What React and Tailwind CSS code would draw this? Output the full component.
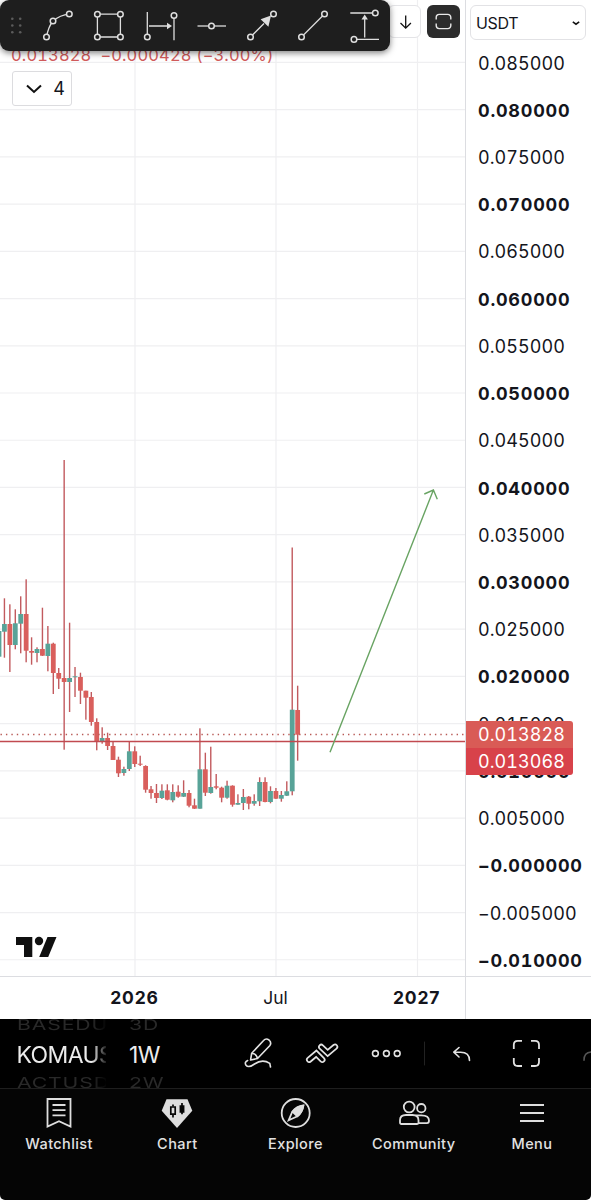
import React from "react";

const GREEN = "#58a398";
const RED = "#d95f5c";

// [wick top, body top, body bottom, wick bottom, rising]
const CANDLES = [
	[631, 631, 656.7, 656.7, 1],
	[598.3, 624, 631.7, 657.7, 1],
	[604.3, 624, 645, 672, 0],
	[609.3, 623.3, 645, 649.3, 1],
	[596.3, 614, 623.7, 653.3, 1],
	[579.3, 614, 650.7, 662.3, 0],
	[637.3, 651, 652.7, 664.7, 0],
	[647.3, 649, 653, 662.3, 1],
	[607.7, 649, 655.7, 656, 0],
	[626, 643.7, 656, 671.3, 1],
	[642.7, 643.7, 673, 694, 0],
	[668, 673, 678.7, 689, 0],
	[460, 678, 682, 749.7, 0],
	[622.7, 678, 682, 712, 1],
	[667, 676.3, 677.3, 697, 1],
	[672.7, 677, 690.7, 704, 0],
	[690.7, 690.7, 697.7, 719.7, 0],
	[692, 697, 722, 725.7, 0],
	[718.3, 722, 741.7, 750.3, 0],
	[727.3, 738, 741.7, 743.7, 1],
	[732.7, 738, 746, 750, 0],
	[741.7, 746, 760, 760, 0],
	[756.7, 759.7, 773.3, 777, 0],
	[766.7, 769, 773, 775.7, 1],
	[741, 751.3, 769, 771, 1],
	[746.3, 751.3, 764, 767, 0],
	[755.7, 763.7, 764.7, 766, 0],
	[765.3, 766, 789.7, 792.7, 0],
	[786, 789.3, 793, 798.7, 0],
	[784, 793, 798, 803, 0],
	[784.3, 790.7, 798, 799, 1],
	[784.3, 790.3, 799.7, 800.3, 0],
	[784.3, 792, 800.3, 802.3, 1],
	[785.3, 791.7, 796.7, 797.7, 0],
	[780.3, 793, 796.7, 797, 1],
	[790, 793, 805.7, 807.3, 0],
	[798.7, 805.3, 808.7, 809, 0],
	[728.3, 769.3, 808.7, 808.7, 1],
	[752.7, 769.3, 792.7, 796, 0],
	[746.7, 787, 793, 793.7, 1],
	[774, 786.3, 787.7, 789.3, 0],
	[786.7, 787.7, 797.7, 802.3, 0],
	[780.7, 785.7, 797.7, 798.7, 1],
	[785.3, 785.7, 804.7, 806.7, 0],
	[794.3, 803, 804.7, 804.7, 1],
	[789, 797, 803, 810, 1],
	[796, 796.7, 803.7, 809.3, 0],
	[794.3, 801, 803.7, 805.7, 1],
	[777.3, 782, 801.3, 806, 1],
	[777.3, 782, 802, 802.3, 0],
	[786.3, 791, 802, 803.3, 1],
	[788, 791, 798.7, 799, 0],
	[791, 795, 798.7, 801.7, 1],
	[781.3, 791.3, 795.7, 796, 1],
	[547.5, 709.7, 791.3, 795.3, 1],
	[685.7, 710, 734.7, 760.7, 0],
];

const PRICES = [
	"0.085000",
	"0.080000",
	"0.075000",
	"0.070000",
	"0.065000",
	"0.060000",
	"0.055000",
	"0.050000",
	"0.045000",
	"0.040000",
	"0.035000",
	"0.030000",
	"0.025000",
	"0.020000",
	"0.015000",
	"0.010000",
	"0.005000",
	"−0.000000",
	"−0.005000",
	"−0.010000",
];

const Chart = () => (
	<svg className="block h-[976px] w-[465px]" viewBox="0 0 465 976">
		<g stroke="#efeff1" strokeWidth="1.2">
			{PRICES.map((price, i) => (
				<line
					key={price}
					x1="0"
					x2="465"
					y1={62.4 + i * 47.23}
					y2={62.4 + i * 47.23}
				/>
			))}
			<line x1="135" x2="135" y1="0" y2="976" />
			<line x1="276" x2="276" y1="0" y2="976" />
			<line x1="417.5" x2="417.5" y1="0" y2="976" />
		</g>
		{CANDLES.map(([high, top, bottom, low, up], i) => {
			const x = -1 + i * 5.43;
			return (
				<g key={i}>
					<rect
						x={x - 0.7}
						y={high}
						width="1.4"
						height={low - high}
						fill="#c25a5e"
					/>
					<rect
						x={x - 2.4}
						y={top}
						width="4.8"
						height={Math.max(bottom - top, 1)}
						fill={up ? GREEN : RED}
					/>
				</g>
			);
		})}
		<line
			x1="0.5"
			x2="465"
			y1="734.5"
			y2="734.5"
			stroke="#b85a56"
			strokeWidth="1.4"
			strokeDasharray="1.4 4.03"
		/>
		<line
			x1="0"
			x2="465"
			y1="741.5"
			y2="741.5"
			stroke="#c14a50"
			strokeWidth="1.4"
		/>
		<path
			d="M330 752.3 433.4 490M424.3 494l9.1-4 3.9 9.2"
			fill="none"
			stroke="#69a463"
			strokeWidth="1.4"
		/>
		<g fill="#101010">
			<path d="M16 937h16.3v20H24v-12h-8z" />
			<circle cx="39" cy="941" r="4.2" />
			<path d="M47.5 937h9L48.2 957h-9z" />
		</g>
	</svg>
);

const PriceScale = () => (
	<div className="relative w-[126px] border-l border-[#dcdde1] tabular-nums">
		<div className="mt-[5px] mr-[5px] ml-1 flex h-[35px] items-center justify-between rounded-[6px] border border-[#e2e2e5] bg-white pr-[5px] pl-[5px]">
			<span className="text-[16px] tracking-[-0.3px]">USDT</span>
			<svg
				className="h-2 w-2"
				viewBox="0 0 8 8"
				fill="none"
				stroke="#111"
				strokeWidth="1.5"
			>
				<path d="m.8 2.8 3.2 2.4 3.2-2.4" />
			</svg>
		</div>
		<div className="-mt-[0.5px] flex flex-col pl-3 text-[18px]">
			{PRICES.map((price, i) => (
				<span
					key={price}
					className={
						i % 2
							? "flex h-[47.23px] items-center font-bold tracking-[0.75px] whitespace-nowrap"
							: "flex h-[47.23px] items-center tracking-[0.05px] whitespace-nowrap"
					}
				>
					{price}
				</span>
			))}
		</div>
		<div className="absolute top-[721px] left-0 flex w-[107px] flex-col overflow-hidden rounded-r-[3px] text-[18px] tracking-[0.05px] text-white">
			<span className="flex h-[26.5px] items-center bg-[#d95b56] pl-3">
				0.013828
			</span>
			<span className="flex h-[27px] items-center bg-[#d8424a] pl-3">
				0.013068
			</span>
		</div>
	</div>
);

const DrawingTools = () => (
	<div className="absolute top-0 left-0 h-[51px] w-[389.5px] rounded-[9px] bg-[#1e1e1e] shadow-[0_2px_6px_rgba(0,0,0,0.5)]">
		<svg
			className="h-[51px] w-[389px]"
			viewBox="0 0 389 51"
			fill="none"
			stroke="#dedede"
			strokeWidth="1.3"
		>
			<g fill="#5c5c5c" stroke="none">
				{[18.7, 25.5, 32.3].map((y) => (
					<g key={y}>
						<circle cx="12.3" cy={y} r="1.3" />
						<circle cx="20.2" cy={y} r="1.3" />
					</g>
				))}
			</g>
			<path d="M46.5 37Q48.5 26 53 21.2M53 21.2Q60 15 69.3 14.2" />
			<path d="M97.4 14.2h23v22.8h-23z" />
			<path d="M147.3 12v25M174 15.5v24.7M149 26h20" />
			<path d="M197.5 26h28.5" />
			<path d="M250.5 37 264 23.5M271 16.5l2.5-2.5" />
			<path d="m301.5 37 23-23" />
			<path d="M350.3 13H375M354 39.4h25M364.7 37.5V18" />
			<g fill="#dedede" stroke="none">
				<path d="m172 26-5-3.2v6.4z" />
				<path d="m271 15.5-2.6 11.2-7.8-7.5z" />
				<path d="m364.7 14.5-3.2 5h6.4z" />
			</g>
			<g fill="#1e1e1e" strokeWidth="1.5">
				<circle cx="46.5" cy="37" r="2.8" />
				<circle cx="53" cy="21" r="2.8" />
				<circle cx="69.3" cy="14" r="2.8" />
				<circle cx="97.4" cy="14.2" r="2.8" />
				<circle cx="120.4" cy="14.2" r="2.8" />
				<circle cx="97.4" cy="37" r="2.8" />
				<circle cx="120.4" cy="37" r="2.8" />
				<circle cx="147.3" cy="37" r="2.8" />
				<circle cx="174" cy="15.5" r="2.8" />
				<circle cx="211.5" cy="26" r="2.8" />
				<circle cx="250.5" cy="37" r="2.8" />
				<circle cx="273.5" cy="14" r="2.8" />
				<circle cx="301.5" cy="37" r="2.8" />
				<circle cx="324.5" cy="14" r="2.8" />
				<circle cx="375.3" cy="13" r="2.8" />
				<circle cx="354" cy="39.4" r="2.8" />
			</g>
		</svg>
	</div>
);

const ChartOverlay = () => (
	<>
		<div className="absolute top-[44px] left-[11px] flex gap-[9px] text-[16.5px] leading-[22px] tracking-[0.13px] whitespace-nowrap text-[#d15b5b] tabular-nums">
			<span>0.013828</span>
			<span>−0.000428 (−3.00%)</span>
		</div>
		<div className="absolute top-[71px] left-3 flex h-[35px] w-[60px] items-center justify-between rounded-[3px] border border-[#dcdcdf] bg-white pr-[6px] pl-3 text-[18px]">
			<svg
				className="h-[10px] w-[18px]"
				viewBox="0 0 18 10"
				fill="none"
				stroke="#111"
				strokeWidth="2"
			>
				<path d="m2 1.5 7 6.5 7-6.5" />
			</svg>
			<span>4</span>
		</div>
		<div className="absolute top-[5px] left-[388px] flex h-[33px] w-[33px] items-center justify-center rounded-[6px] border border-[#e4e4e7] bg-white">
			<svg
				className="h-4 w-4"
				viewBox="0 0 16 16"
				fill="none"
				stroke="#111"
				strokeWidth="1.3"
			>
				<path d="M8.7 1.5v12.7M3.5 9l5.2 5.2L13.9 9" />
			</svg>
		</div>
		<div className="absolute top-[5px] left-[427px] flex h-[33px] w-[32.5px] items-center justify-center rounded-[6px] bg-[#2c2c2c]">
			<svg
				className="h-[17px] w-[17px]"
				viewBox="0 0 17 17"
				fill="none"
				stroke="#e8e8e8"
				strokeWidth="1.4"
			>
				<path d="M1.2 6.5V4.4a3 3 0 0 1 3-3h8.6a3 3 0 0 1 3 3v2.1M1.2 10.5v2.1a3 3 0 0 0 3 3h8.6a3 3 0 0 0 3-3v-2.1" />
			</svg>
		</div>
		<DrawingTools />
	</>
);

const Wheel = ({ items, className }) => (
	<div className={`flex flex-col overflow-hidden ${className}`}>
		<span className="-mt-[5px] h-[20px] origin-left scale-x-[1.06] scale-y-[0.75] text-[20px] leading-[22px] tracking-[0.8px] text-[#292929]">
			{items[0]}
		</span>
		<span className="h-[39px] text-[23px] leading-[42px] text-[#ececec]">
			{items[1]}
		</span>
		<span className="h-[20px] origin-left scale-x-[1.06] scale-y-[0.75] text-[20px] leading-[21px] tracking-[0.8px] text-[#292929]">
			{items[2]}
		</span>
	</div>
);

const Toolbar = () => (
	<div className="flex h-[70px] border-b border-[#1e1e1e] bg-black">
		<Wheel
			className="ml-[16.5px] w-[89px] tracking-[-0.6px] [mask-image:linear-gradient(to_right,black_75px,transparent_91px)]"
			items={["BASEDUSDT", "KOMAUSDT", "ACTUSDT"]}
		/>
		<Wheel
			className="ml-[23.5px] w-[50px] tracking-[-0.5px]"
			items={["3D", "1W", "2W"]}
		/>
		<svg
			className="ml-auto h-[68px] w-[351px]"
			viewBox="240 1019 351 68"
			fill="none"
			stroke="#e2e2e2"
			strokeWidth="1.6"
			strokeLinecap="round"
			strokeLinejoin="round"
		>
			<path d="M250.6 1060 251.7 1053.2 263.6 1040.5Q266 1037.8 269 1040 272 1042.8 269.7 1045.7L257.5 1058.5ZM251.8 1053.3Q256.6 1053.6 257.4 1058.4M247.7 1060.5Q244.3 1062 245.8 1065 248.5 1068.5 254.5 1064 262.5 1058.5 269.8 1063.4L270.5 1067" />
			<g strokeLinejoin="miter">
				<path
					d="m309.2 1059.7 7.1-6 6 6M321.3 1047l6.4 6 7.3-6.2"
					strokeWidth="6.4"
				/>
				<path
					d="m309.2 1059.7 7.1-6 6 6M321.3 1047l6.4 6 7.3-6.2"
					stroke="#000"
					strokeWidth="3"
				/>
			</g>
			<circle cx="375.4" cy="1053.5" r="2.9" />
			<circle cx="386.4" cy="1053.5" r="2.9" />
			<circle cx="397.2" cy="1053.5" r="2.9" />
			<path d="M424.5 1042v23" stroke="#222" strokeWidth="1" />
			<path d="m459 1047.5-5.2 4.7 5.2 4.8M454.2 1052.2h6.3q9 0 9 8.2" />
			<path
				d="M513.8 1049v-4.2q0-4 4-4h4.2M531 1040.8h4q4 0 4 4v4.2M539 1058v4q0 4-4 4h-4M522 1066h-4.2q-4 0-4-4v-4"
				strokeWidth="1.8"
				strokeLinecap="butt"
			/>
			<path d="M591 1052q-7 .5-7 8.2" stroke="#555" />
		</svg>
	</div>
);

const icons = {
	Watchlist: (
		<path d="M4.5 2h23v27.5L16 24.2 4.5 29.5zM9.5 8h13M9.5 13.2h13M9.5 18.4h13" />
	),
	Chart: (
		<>
			<path d="M5.5 2.3h21l4.8 11.4L16 31 .7 13.7z" fill="#dedede" stroke="none" />
			<g stroke="#070707" strokeWidth="1.7">
				<path d="M12 7.5v2M12 17.5v3M21 6v3M21 15v2.2" />
				<path d="M9.8 10h4.4v7.2H9.8z" />
				<path d="M19.4 9h3.2v6h-3.2z" fill="#070707" />
			</g>
		</>
	),
	Explore: (
		<>
			<circle cx="15.7" cy="16" r="14" />
			<path d="m8.7 23.2 3.7-8.7q4-5 11-6-1.2 7-6 10.8z" />
			<path d="m12.7 14.8 4.5 4.4Q22.5 15 23.3 8.6q-7 1.4-10.6 6.2z" fill="#dedede" />
		</>
	),
	Community: (
		<>
			<circle cx="11.2" cy="10" r="5.4" />
			<circle cx="23.3" cy="11.2" r="4.2" />
			<path d="M2 25.6v-2.4Q2 18 8 18h6.5q6 0 6 5.2v2.4q0 1.4-1.4 1.4H3.4Q2 27 2 25.6zM17.6 18.4h5.7q7.7 0 7.7 5.2 0 2.6-2 2.6h-8.5" />
		</>
	),
	Menu: <path d="M4 8h24M4 16h24M4 24h24" />,
};

const BottomNav = () => (
	<div className="flex h-[111px] bg-[#050505] pt-[8px]">
		{Object.keys(icons).map((name) => (
			<div key={name} className="flex flex-1 flex-col items-center">
				<svg
					className="h-8 w-8"
					viewBox="0 0 32 32"
					fill="none"
					stroke="#dedede"
					strokeWidth="1.8"
				>
					{icons[name]}
				</svg>
				<span className="mt-[5px] text-[14.5px] leading-5 font-medium tracking-[0.4px] text-[#e2e2e2]">
					{name}
				</span>
			</div>
		))}
	</div>
);

const App = () => {
	return (
		<div className="relative flex h-[1200px] w-[591px] flex-col overflow-hidden bg-white font-['Inter',sans-serif] text-[#14151c]">
			<div className="flex h-[976px]">
				<Chart />
				<PriceScale />
			</div>
			<div className="flex h-[43px] border-t border-[#dcdde1] text-[17.5px]">
				<div className="flex w-[466px] items-center border-r border-[#dcdde1] pt-px pl-[64px]">
					<span className="w-[141px] text-center font-bold tracking-[0.8px]">
						2026
					</span>
					<span className="w-[141px] text-center">Jul</span>
					<span className="w-[119px] pl-[47px] font-bold tracking-[0.8px]">
						2027
					</span>
				</div>
			</div>
			<div className="overflow-hidden rounded-b-[5px]">
				<Toolbar />
				<BottomNav />
			</div>
			<ChartOverlay />
		</div>
	);
};

export default App;
